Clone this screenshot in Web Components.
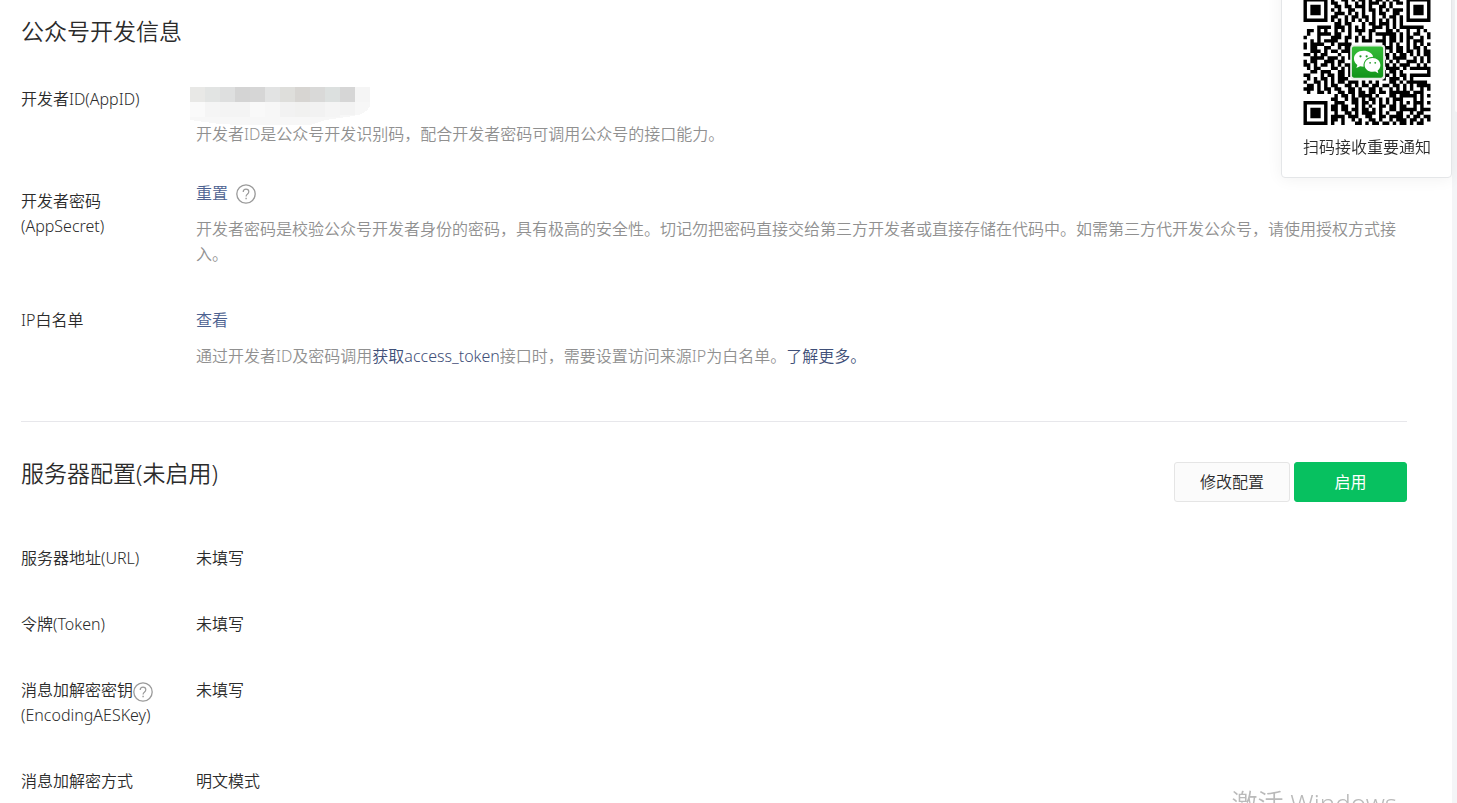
<!DOCTYPE html>
<html lang="zh-CN">
<head>
<meta charset="utf-8">
<title>公众号开发信息</title>
<style>
  body {
    margin: 0;
    background: #fff;
    color: #2b2b2b;
    font: 350 16px/25px "Noto Sans", "Noto Sans CJK SC", sans-serif;
  }
</style>
</head>
<body>
<dev-page></dev-page>

<script>
function createTemplate(html) {
  const template = document.createElement('template');
  template.innerHTML = html.trim();
  return template;
}

class BaseElement extends HTMLElement {
  constructor() {
    super();
    this.attachShadow({ mode: 'open' });
    this.shadowRoot.appendChild(this.constructor.template.content.cloneNode(true));
  }
}

class HelpButton extends BaseElement {
  static template = createTemplate(`
    <style>
      :host { display: inline-block; height: 20px; vertical-align: middle; }
      button { display: block; width: 20px; height: 20px; padding: 0; border: 0; background: none; color: #9a9a9a; cursor: pointer; }
      svg { display: block; }
    </style>
    <button type="button" aria-label="帮助">
      <svg width="20" height="20" viewBox="0 0 20 20" fill="none" stroke="currentColor">
        <circle cx="10" cy="10" r="9.2" stroke-width="1.3"/>
        <path d="M7.2 8.1C7.2 6.3 8.4 5.2 10 5.2s2.8 1 2.8 2.6c0 1.2-.7 1.8-1.5 2.5-.8.6-1.2 1.1-1.2 2.2" stroke-width="1.2"/>
        <path d="M10.1 13.7v1.5" stroke-width="1.4"/>
      </svg>
    </button>
  `);
}

class TextLink extends BaseElement {
  static template = createTemplate(`<style>
      :host { display: inline; }
      a { color: #4c6190; text-decoration: none; }
      :host([dark]) a { color: #3f4f78; }
    </style><a href="#"><slot></slot></a>`);
}

class ActionButton extends BaseElement {
  static template = createTemplate(`
    <style>
      :host { display: block; }
      button {
        box-sizing: border-box;
        min-width: 113px;
        height: 40px;
        padding: 0 25px;
        border: 1px solid #e5e5e5;
        border-radius: 3px;
        background: #fbfbfb;
        color: #2b2b2b;
        font: inherit;
        cursor: pointer;
      }
      :host([primary]) button { border-color: #07c160; background: #07c160; color: #fff; font-weight: 400; }
    </style>
    <button type="button"><slot></slot></button>
  `);
}

class InfoRow extends BaseElement {
  static template = createTemplate(`
    <style>
      :host { display: grid; grid-template-columns: 175px 1fr; margin-bottom: 41px; }
      :host([compact]) { margin-bottom: 34px; }
      :host([offset]) .label { padding-top: 8px; }
      .action { display: flex; align-items: center; gap: 8px; }
      .desc { color: #909090; }
      ::slotted([slot="action"]) { margin-bottom: 11px; }
    </style>
    <div class="label"><slot name="label"></slot></div>
    <div>
      <div class="action"><slot name="action"></slot></div>
      <slot></slot>
      <div class="desc"><slot name="desc"></slot></div>
    </div>
  `);
}

class MaskedValue extends BaseElement {
  static template = createTemplate(`
    <style>
      :host { display: block; height: 35px; margin-left: -6px; }
      svg { display: block; overflow: visible; }
    </style>
    <svg width="180" height="38" viewBox="0 0 180 38" shape-rendering="crispEdges" aria-hidden="true">
      <path d="M0 15h180v4q-3 8-17 10l-28 4-15 5q-60 1-90-1L0 33z" fill="#f7f7f7"/>
    </svg>
  `);

  connectedCallback() {
    const svg = this.shadowRoot.querySelector('svg');
    const top = ['#e8e8e6', '#e2e4e3', '#dedfdf', '#d4d4d4', '#d6d6d6', '#e2e3e3', '#dededb', '#d7d5d2', '#d9d9d8', '#dce0df', '#d6d6d6', '#f5f5f5'];
    const mid = ['#fafafa', '#f5f5f5', '#f4f4f4', '#f4f4f4', '#f9f9f9', '#f7f7f7', '#f2f2f2', '#f1f1f0', '#f2f2f2', '#f5f5f5', '#f3f3f3'];
    svg.innerHTML += top.map((c, i) => `<rect x="${i * 15}" width="15" height="15" fill="${c}"/>`).join('') +
      mid.map((c, i) => `<rect x="${i * 15}" y="15" width="15" height="${i > 9 ? 13 : 15}" fill="${c}"/>`).join('');
  }
}

const QR_ROWS = [
  '#######.#..##.#.##.#.##.#.##..#######',
  '#.....#.##..#..#.#.###.#.#.##.#.....#',
  '#.###.#..##.##.###.#..##.#....#.###.#',
  '#.###.#.#.#..##..#.##.#.#.###.#.###.#',
  '#.###.#..###.#.#.#..#.##..##..#.###.#',
  '#.....#.##..#.##.##.#..#.##.#.#.....#',
  '#######.#.#.#.#.#.#.#.#.#.#.#.#######',
  '.........##.##...#.##.###.#.#........',
  '....####.###.#.#.#..###.#.#.#######..',
  '.##.#.#..#.#.#.###.##...##.#..#..#.#.',
  '.#..####.##..#..#..#.######.#.#.##..#',
  '#...#...###.##.#.#.#...#.##.#.##..#.#',
  '..#.#.####..#..#.###.###.##.#.#.###..',
  '#.####..#.####.........#.#.#..#.#.#.#',
  '#.##..##..#.##.........###.##.#.##.#.',
  '..###.#.##.###.........#.#.##.##.#.##',
  '##.#.##...#..#.........##.#.##.#.#.##',
  '..####.###.#.#..........#.####..#.#.#',
  '#.##..###.##..........##.#.#..###.#.#',
  '##.#.##.#.#.##.........##.#.###..#.#.',
  '.#.##...##.#.#..........####.#.######',
  '..##.###..##.#.........#.##.#.......#',
  '##...#.##.##.#.........##.#.##.######',
  '.#.#.##.#.###..........#.###.#.#.....',
  '#..##.#.#.##.###.#.#.#...##.#.######.',
  '.##.#.#.##..##.#.##.##.##.##.#.#.####',
  '###.#.##.##..##.#..##.#..#.#.#.#..#.#',
  '.#..##.#..##.##.##.##.##.######.###..',
  '.........#.##.#.####.#...##.#####.#.#',
  '........##..#.##.#.##.#.#.###...#.#..',
  '#######..###..##.##.#.#.#.#.#.#.###.#',
  '#.....#.##.##..#.#.#..##.##.##..#.#..',
  '#.###.#.##.##.##.##.#.#..##.#####.###',
  '#.###.#..#..##.#.####.#.#..##..#.##..',
  '#.###.#.####.###..##..##.####.#.##.##',
  '#.....#.##.#..#.#..##.#..#.###.##.#.#',
  '#######.#..#...##.#.##.##.#.##.#.##..'
];

class QrCode extends BaseElement {
  static template = createTemplate(`
    <style>
      :host { display: block; }
      svg { display: block; width: 128px; height: 127px; }
    </style>
    <svg viewBox="0 0 37 37" role="img" aria-label="二维码">
      <path class="modules" fill="#000"/>
      <defs>
        <linearGradient id="green" x2="0" y2="1">
          <stop offset="0" stop-color="#36bd38"/>
          <stop offset="1" stop-color="#119419"/>
        </linearGradient>
      </defs>
      <rect x="13.6" y="13.6" width="10.2" height="10.2" rx="1" fill="#e8eee8"/>
      <rect x="14.1" y="14.1" width="9.1" height="9.1" rx=".6" fill="url(#green)"/>
      <path d="M17.5 15.4c-1.6 0-2.8 1-2.8 2.3 0 .7.4 1.4 1 1.8l-.3.9 1.1-.5 1 .1c-.2-1.7 1.1-2.9 2.8-2.9-.3-1-1.4-1.7-2.8-1.7z" fill="#fff"/>
      <path d="M20.1 17.5c-1.3 0-2.3.9-2.3 2s1 2 2.3 2l.8-.1.9.5-.2-.8c.5-.4.8-.9.8-1.6 0-1.1-1-2-2.3-2z" fill="#fff"/>
      <g fill="#229a28">
        <circle cx="16.6" cy="17" r=".32"/><circle cx="18.4" cy="17" r=".32"/>
        <circle cx="19.4" cy="18.9" r=".26"/><circle cx="20.9" cy="18.9" r=".26"/>
      </g>
    </svg>
  `);

  connectedCallback() {
    let d = '';
    QR_ROWS.forEach((row, y) => {
      for (const run of row.matchAll(/#+/g)) {
        d += `M${run.index} ${y}h${run[0].length}v1h-${run[0].length}z`;
      }
    });
    this.shadowRoot.querySelector('.modules').setAttribute('d', d);
  }
}

class QrCard extends BaseElement {
  static template = createTemplate(`
    <style>
      :host {
        position: fixed;
        top: -24px;
        right: 5px;
        padding: 21px 20px 17px 21px;
        border: 1px solid #e4e6e8;
        border-radius: 4px;
        background: #fff;
        box-shadow: 0 1px 16px rgba(0, 0, 0, .06);
        text-align: center;
      }
      p { margin: 10px 0 0; }
    </style>
    <qr-code></qr-code>
    <p><slot></slot></p>
  `);
}

class PageSection extends BaseElement {
  static template = createTemplate(`
    <style>
      :host { display: block; }
      :host([divided]) { padding-bottom: 11px; border-bottom: 1px solid #e7e7eb; }
      header { display: flex; justify-content: space-between; align-items: flex-start; height: 40px; margin-bottom: 44px; }
      :host([divided]) header { margin-bottom: 27px; }
      h2 { margin: 0; font-size: 23px; font-weight: inherit; line-height: 22px; }
      .buttons { display: flex; gap: 4px; }
    </style>
    <header>
      <h2><slot name="title"></slot></h2>
      <div class="buttons"><slot name="buttons"></slot></div>
    </header>
    <slot></slot>
  `);
}

class DevPage extends BaseElement {
  static template = createTemplate(`
    <style>
      :host { display: flex; min-height: 100vh; }
      main { flex: 1; padding: 20px 45px 0 21px; }
      page-section + page-section { margin-top: 40px; }
      .rail { width: 5px; background: #f4f5f7; }
      .thumb { height: 112px; margin-left: 3px; border-bottom-left-radius: 2px; background: #fff; }
      .watermark { position: fixed; right: 60px; bottom: -18px; color: #bababa; font-size: 26px; line-height: 36px; pointer-events: none; }
    </style>
    <main>
      <page-section divided>
        <span slot="title">公众号开发信息</span>
        <info-row compact>
          <span slot="label">开发者ID(AppID)</span>
          <masked-value></masked-value>
          <span slot="desc">开发者ID是公众号开发识别码，配合开发者密码可调用公众号的接口能力。</span>
        </info-row>
        <info-row offset>
          <span slot="label">开发者密码<br>(AppSecret)</span>
          <text-link slot="action">重置</text-link>
          <help-button slot="action"></help-button>
          <span slot="desc">开发者密码是校验公众号开发者身份的密码，具有极高的安全性。切记勿把密码直接交给第三方开发者或直接存储在代码中。如需第三方代开发公众号，请使用授权方式接入。</span>
        </info-row>
        <info-row>
          <span slot="label">IP白名单</span>
          <text-link slot="action">查看</text-link>
          <span slot="desc">通过开发者ID及密码调用<text-link dark>获取access_token</text-link>接口时，需要设置访问来源IP为白名单。<text-link dark>了解更多。</text-link></span>
        </info-row>
      </page-section>
      <page-section>
        <span slot="title">服务器配置(未启用)</span>
        <action-button slot="buttons">修改配置</action-button>
        <action-button slot="buttons" primary>启用</action-button>
        <info-row>
          <span slot="label">服务器地址(URL)</span>
          <span>未填写</span>
        </info-row>
        <info-row>
          <span slot="label">令牌(Token)</span>
          <span>未填写</span>
        </info-row>
        <info-row>
          <span slot="label">消息加解密密钥<help-button></help-button><br>(EncodingAESKey)</span>
          <span>未填写</span>
        </info-row>
        <info-row>
          <span slot="label">消息加解密方式</span>
          <span>明文模式</span>
        </info-row>
      </page-section>
    </main>
    <div class="rail"><div class="thumb"></div></div>
    <qr-card>扫码接收重要通知</qr-card>
    <div class="watermark">激活 Windows</div>
  `);
}

customElements.define('help-button', HelpButton);
customElements.define('text-link', TextLink);
customElements.define('action-button', ActionButton);
customElements.define('info-row', InfoRow);
customElements.define('masked-value', MaskedValue);
customElements.define('qr-code', QrCode);
customElements.define('qr-card', QrCard);
customElements.define('page-section', PageSection);
customElements.define('dev-page', DevPage);
</script>
</body>
</html>
